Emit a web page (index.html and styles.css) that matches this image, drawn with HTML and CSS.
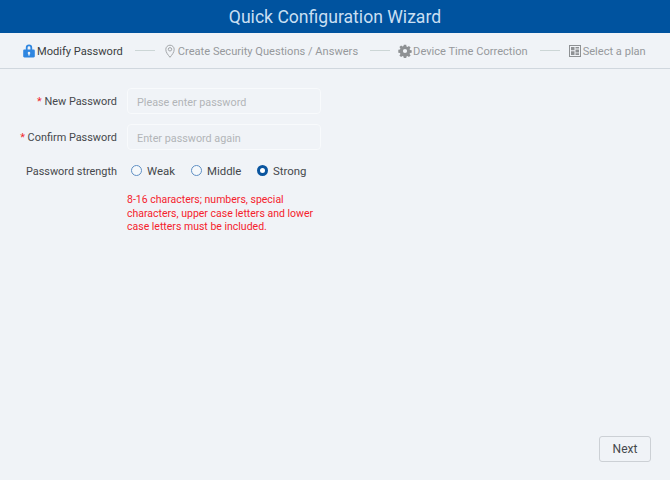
FILE: index.html
```html
<!DOCTYPE html>
<html lang="en">
<head>
<meta charset="utf-8">
<title>Quick Configuration Wizard</title>
<link rel="stylesheet" href="styles.css">
</head>
<body>
<div class="page">
  <header class="title">Quick Configuration Wizard</header>
  <nav class="steps">
    <div class="step active">
      <svg class="icon" viewBox="0 0 14 14"><path fill="#2f86e0" fill-rule="evenodd" d="M3.800 5.600V3.700a3.200 3.200 0 0 1 6.400 0v1.900h1.400c.7 0 1.200.5 1.200 1.200v5.400c0 .7-.5 1.200-1.200 1.200H2.400c-.7 0-1.200-.5-1.200-1.200V6.800c0-.7.5-1.200 1.200-1.200zm1.800 0h2.800V3.700a1.400 1.400 0 0 0-2.800 0zM7 7.700a1.300 1.300 0 0 0-.7 2.400v1.400h1.400v-1.400A1.300 1.300 0 0 0 7 7.700z"/></svg>
      <span>Modify Password</span>
    </div>
    <i class="sep"></i>
    <div class="step">
      <svg class="icon" viewBox="0 0 14 14"><path fill="none" stroke="#a3a6a9" d="M7 13.300C5 10.800 2.800 8.400 2.800 5.400a4.200 4.200 0 0 1 8.400 0c0 3-2.200 5.400-4.200 7.900z"/><circle cx="7" cy="5.300" r="1.700" fill="none" stroke="#a3a6a9"/></svg>
      <span>Create Security Questions / Answers</span>
    </div>
    <i class="sep"></i>
    <div class="step">
      <svg class="icon" viewBox="0 0 14 14"><path fill="#8e9194" fill-rule="evenodd" d="M5.800.8h2.400l.3 1.700 1 .4 1.400-1 1.700 1.700-1 1.400.4 1 1.700.3v2.400l-1.700.3-.4 1 1 1.400-1.700 1.700-1.400-1-1 .4-.3 1.700H5.800l-.3-1.700-1-.4-1.400 1-1.700-1.700 1-1.400-.4-1-1.700-.3V5.800l1.700-.3.4-1-1-1.400 1.700-1.700 1.400 1 1-.4zM7 4.900a2.100 2.100 0 1 0 0 4.200 2.100 2.100 0 0 0 0-4.200z"/></svg>
      <span>Device Time Correction</span>
    </div>
    <i class="sep"></i>
    <div class="step">
      <svg class="icon" viewBox="0 0 14 14"><rect x="1.500" y="1.500" width="11" height="11" fill="none" stroke="#8e9194"/><path fill="#8e9194" d="M3 3h3.500v3.200H3zM7.500 3H11v1.500H7.500zM7.500 5.400H11v3H7.500zM3 7.200h3.500V11H3zM7.500 9.300H11V11H7.500z"/></svg>
      <span>Select a plan</span>
    </div>
  </nav>
  <main class="content">
    <form class="form">
      <div class="row">
        <label class="label"><b>*</b> New Password</label>
        <input class="input" type="password" placeholder="Please enter password">
      </div>
      <div class="row">
        <label class="label"><b>*</b> Confirm Password</label>
        <input class="input" type="password" placeholder="Enter password again">
      </div>
      <div class="row strength">
        <span class="label">Password strength</span>
        <div class="radios">
          <span class="radio"><i class="dot"></i>Weak</span>
          <span class="radio"><i class="dot"></i>Middle</span>
          <span class="radio"><i class="dot on"></i>Strong</span>
        </div>
      </div>
      <p class="hint">8-16 characters; numbers, special characters, upper case letters and lower case letters must be included.</p>
    </form>
    <div class="actions"><button class="next" type="button">Next</button></div>
  </main>
</div>
</body>
</html>
```

FILE: styles.css
```css
* { box-sizing: border-box; }
html, body { margin: 0; height: 100%; }
body { font-family: Roboto, "Noto Sans", sans-serif; font-size: 11.100px; color: #45484c; background: #f0f3f7; }
.page { width: 670px; height: 480px; display: flex; flex-direction: column; overflow: hidden; }
.title { height: 33px; flex: none; background: #00539f; color: #c9dff2; font-size: 17.600px; line-height: 35px; text-align: center; }
.steps { height: 36px; flex: none; display: flex; align-items: center; padding: 0 0 0 22px; border-bottom: 1px solid #d0d7de; color: #96999c; }
.step { display: flex; align-items: center; gap: 1px; white-space: nowrap; }
.step span { padding-top: 2px; }
.step.active { color: #3b3e42; }
.icon { width: 14px; height: 14px; flex: none; }
.sep { width: 20px; height: 1px; margin: 0 8px 0 12px; background: #ccd6d6; flex: none; }
.content { flex: 1; position: relative; display: flex; flex-direction: column; }
.form { padding-top: 19px; }
.row { display: flex; align-items: center; height: 26px; margin-bottom: 10px; }
.label { width: 117px; flex: none; text-align: right; font-size: 10.900px; }
.label b { color: #f0282d; font-weight: 400; }
.input { width: 194px; height: 26px; margin-left: 10px; padding: 2px 9px 0; border: 1px solid #f8fafc; border-radius: 4px; background: #f0f3f7; font: inherit; font-size: 10.800px; color: #45484c; outline: 0; }
.input::placeholder { color: #b2b5b8; opacity: 1; }
.strength { margin-bottom: 0; height: 20px; margin-top: 2px; }
.strength .label { padding-top: 2px; }
.radios { display: flex; margin-left: 14px; }
.radio { display: flex; align-items: center; width: 60px; font-size: 11.400px; padding-top: 2px; }
.radio:last-child { width: auto; margin-left: 6px; }
.dot { width: 11px; height: 11px; border: 1px solid #5f8fc4; border-radius: 50%; margin: -2px 5px 0 0; background: #f5f8fb; }
.dot.on { border: 3px solid #0a559f; background: #fff; }
.hint { width: 194px; margin: 13px 0 0 127px; color: #f5222d; font-size: 10.500px; line-height: 13.500px; }
.actions { margin-top: auto; display: flex; justify-content: flex-end; padding: 0 19px 18px 0; }
.next { width: 52px; height: 26px; border: 1px solid #ccd0d5; border-radius: 3px; background: #f0f3f7; font: inherit; font-size: 12px; color: #45484c; padding: 0; }
```
